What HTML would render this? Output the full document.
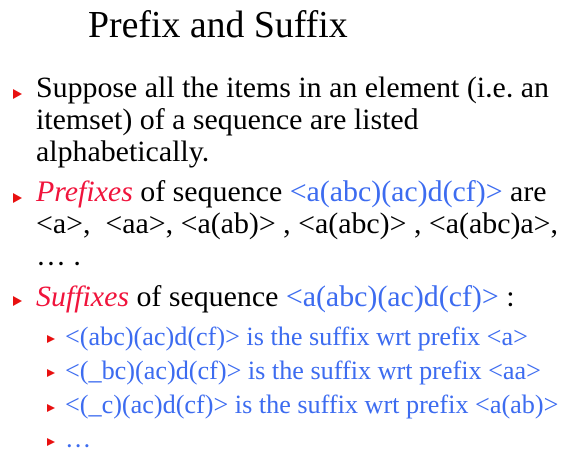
<!DOCTYPE html>
<html><head><meta charset="utf-8"><style>
body{margin:0;width:575px;height:468px;background:#fff;position:relative;overflow:hidden;font-family:"Liberation Serif",serif;color:#000}
.l{position:absolute;white-space:nowrap;font-size:29.9px;line-height:30px}
.s{font-size:26.2px;color:#3d6cf0}
.b{color:#3d6cf0}
.r{color:#f0143c;font-style:italic}
.t{position:absolute;width:0;height:0;border-top:5px solid transparent;border-bottom:5px solid transparent;border-left:9px solid #e81010}
.ts{border-top:4px solid transparent;border-bottom:4px solid transparent;border-left:8px solid #e81010}
</style></head><body>
<div class="l" style="left:88px;top:4px;font-size:37.8px;line-height:42px">Prefix and Suffix</div>
<div class="t" style="left:13px;top:89px"></div>
<div class="l" style="left:36px;top:73px">Suppose all the items in an element (i.e. an</div>
<div class="l" style="left:36px;top:105px">itemset) of a sequence are listed</div>
<div class="l" style="left:36px;top:137px">alphabetically.</div>
<div class="t" style="left:13px;top:193px"></div>
<div class="l" style="left:36px;top:177px"><span class="r">Prefixes</span> of sequence <span class="b">&lt;a(abc)(ac)d(cf)&gt;</span> are</div>
<div class="l" style="left:36px;top:209px">&lt;a&gt;,&nbsp; &lt;aa&gt;, &lt;a(ab)&gt; , &lt;a(abc)&gt; , &lt;a(abc)a&gt;,</div>
<div class="l" style="left:36px;top:241px">… .</div>
<div class="t" style="left:13px;top:296px"></div>
<div class="l" style="left:36px;top:282px"><span class="r">Suffixes</span> of sequence <span class="b">&lt;a(abc)(ac)d(cf)&gt;</span> :</div>
<div class="t ts" style="left:47px;top:335px"></div>
<div class="l s" style="left:65px;top:322px">&lt;(abc)(ac)d(cf)&gt; is the suffix wrt prefix &lt;a&gt;</div>
<div class="t ts" style="left:47px;top:369px"></div>
<div class="l s" style="left:65px;top:356px">&lt;(_bc)(ac)d(cf)&gt; is the suffix wrt prefix &lt;aa&gt;</div>
<div class="t ts" style="left:47px;top:404px"></div>
<div class="l s" style="left:65px;top:390px">&lt;(_c)(ac)d(cf)&gt; is the suffix wrt prefix &lt;a(ab)&gt;</div>
<div class="t ts" style="left:47px;top:438px"></div>
<div class="l s" style="left:65px;top:424px">…</div>
</body></html>
